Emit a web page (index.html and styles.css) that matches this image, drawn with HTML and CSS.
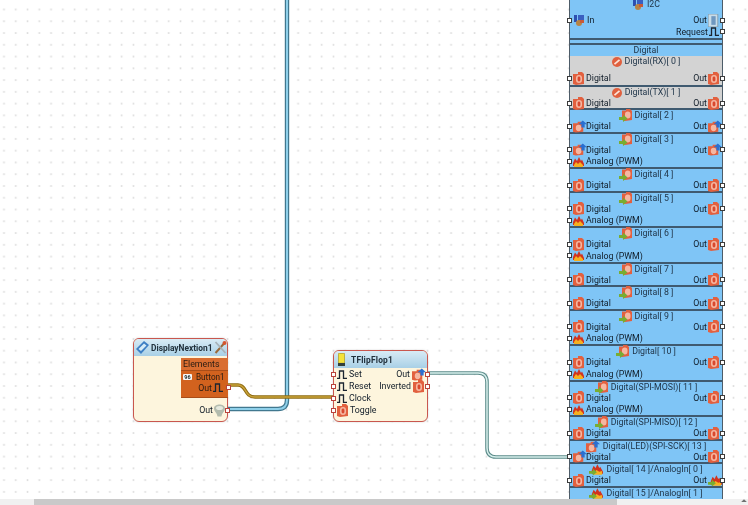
FILE: index.html
```html
<!DOCTYPE html>
<html lang="en">
<head>
<meta charset="utf-8">
<title>Visuino diagram</title>
<link rel="stylesheet" href="styles.css">
</head>
<body>
<svg class="defs" width="0" height="0" aria-hidden="true">
  <symbol id="dig" viewBox="0 0 11 13">
    <path d="M0 2 5 2 5 0 9 0 11 2 11 12 3 13 0 12Z" fill="#e2603f"/>
    <rect x="3" y="3" width="6" height="8" rx="3" fill="#f5b7a2"/>
    <rect x="4.600" y="4.500" width="2.800" height="5" rx="1.400" fill="#d9482e"/>
  </symbol>
  <symbol id="digb" viewBox="0 0 15 13">
    <path d="M0 3 5 3 5 1.500 9 1.500 11 3 11 12 3 13 0 12Z" fill="#e2603f"/>
    <rect x="3" y="4.500" width="6" height="7" rx="3" fill="#f5b7a2"/>
    <path d="M6 4 10.500 0 15 4 12.500 4 12.500 7.500 9 7.500 9 4Z" fill="#2a6fd0"/>
  </symbol>
  <symbol id="digin" viewBox="0 0 13 13">
    <path d="M3 1.500 7 1.500 7 0 11 0 13 2 13 11 6 12 3 11Z" fill="#e2603f"/>
    <rect x="6" y="2.500" width="5.500" height="7" rx="2.700" fill="#f5b7a2"/>
    <path d="M0 8 4 8 4 5.500 8.500 9.500 4 13 4 11 0 11Z" fill="#78ad32"/>
  </symbol>
  <symbol id="pwm" viewBox="0 0 11 11">
    <path d="M0 7 2 2.500 4 5 6 1 8 5 9 3.500 11 8 11 10 0 10Z" fill="#d2331f"/>
    <path d="M1 9 3 6 5 8 7 6 10 9 10 11 1 11Z" fill="#f6b020"/>
  </symbol>
  <symbol id="pwmin" viewBox="0 0 15 13">
    <path d="M3 7 5 2.500 7 5 9 1 11 5 12 3.500 15 9 15 11 3 11Z" fill="#d2331f"/>
    <path d="M5 10 8 7 11 9 14 8 14 12 5 12Z" fill="#f6b020"/>
    <path d="M0 8 4 8 4 5.500 8.500 9.500 4 13 4 11 0 11Z" fill="#78ad32"/>
  </symbol>
  <symbol id="pulse" viewBox="0 0 10 9">
    <path d="M0 8.500H2.500V1H6.500V8.500H10" fill="none" stroke="#1b2530" stroke-width="1.300"/>
  </symbol>
  <symbol id="forbid" viewBox="0 0 10 10">
    <circle cx="5" cy="5" r="5" fill="#e0603f"/>
    <path d="M2.500 7.200 7.500 2.800" stroke="#fde4d8" stroke-width="1.700"/>
  </symbol>
  <symbol id="i2c" viewBox="0 0 12 12">
    <rect x="1" y="1" width="3" height="7" fill="#2d4fb0"/>
    <rect x="5" y="1" width="6" height="7" fill="#3a5fc0"/>
    <circle cx="6" cy="9" r="3" fill="#b78445"/>
    <rect x="7" y="6" width="4" height="3" fill="#c85a38"/>
  </symbol>
  <symbol id="stream" viewBox="0 0 10 12">
    <rect width="9" height="12" fill="#c8dce8" stroke="#7e98a8" stroke-width=".8"/>
    <rect x="3" y="2" width="4" height="8" fill="#6f98c0"/>
  </symbol>
  <symbol id="display" viewBox="0 0 13 13">
    <path d="M0 8 8 0 13 4 5 13Z" fill="#3d7fc4"/>
    <path d="M2.500 8 8 2.500 10.500 4.500 5 10Z" fill="#d6ecf8"/>
  </symbol>
  <symbol id="tools" viewBox="0 0 12 13">
    <path d="M1 12 10 2" stroke="#9a6a3a" stroke-width="2"/>
    <path d="M1 1 11 12" stroke="#a8b2b8" stroke-width="1.800"/>
    <circle cx="10" cy="2" r="2" fill="#d5552f"/>
  </symbol>
  <symbol id="flop" viewBox="0 0 7 13" preserveAspectRatio="none">
    <rect x="0.300" y="0.300" width="6.400" height="10" rx="1" fill="#f4e23a" stroke="#9a8a20" stroke-width=".7"/>
    <rect x="0" y="10" width="7" height="3" fill="#33403a"/>
  </symbol>
  <symbol id="bulb" viewBox="0 0 11 12">
    <path d="M0 4C0 1 3 0 5.500 0S11 1 11 4 8 8 7.500 12H3.500C3 8 0 7 0 4Z" fill="#b4bcae"/>
    <ellipse cx="5.500" cy="3.500" rx="3.500" ry="2" fill="#e6eadf"/>
  </symbol>
</svg>

<main class="canvas">
  <svg class="wires" width="748" height="505" aria-hidden="true">
    <path class="w-blue-o" d="M228 409H278Q287 409 287 400V-2"/>
    <path class="w-blue-i" d="M228 409H278Q287 409 287 400V-2"/>
    <path class="w-teal-o" d="M428 373H478Q487 373 487 382V448Q487 457 496 457H569"/>
    <path class="w-teal-i" d="M428 373H478Q487 373 487 382V448Q487 457 496 457H569"/>
    <path class="w-gold-o" d="M228 385H238C247 385 244 397 255 397H333"/>
    <path class="w-gold-i" d="M228 385H238C247 385 244 397 255 397H333"/>
  </svg>

  <section class="node node-display">
    <header class="node-head">
      <svg class="ic ic13"><use href="#display"/></svg>
      <span class="node-title">DisplayNextion1</span>
      <svg class="ic ic13"><use href="#tools"/></svg>
    </header>
    <div class="elements">
      <div class="el-head">Elements</div>
      <div class="el-row"><span class="el-tag">96</span><span>Button1</span></div>
      <div class="el-out">Out<svg class="ic ic-pulse"><use href="#pulse"/></svg><i class="pin pin-right red"></i></div>
      <div class="el-foot"></div>
    </div>
    <div class="node-out">Out<svg class="ic ic11"><use href="#bulb"/></svg><i class="pin pin-right red"></i></div>
  </section>

  <section class="node node-flop">
    <header class="node-head flop-head">
      <svg class="ic ic-flop"><use href="#flop"/></svg>
      <span class="node-title">TFlipFlop1</span>
    </header>
    <div class="flop-body">
      <div class="flop-row"><i class="pin pin-left red"></i><span class="cell"><svg class="ic ic-pulse"><use href="#pulse"/></svg>Set</span><span class="cell">Out<svg class="ic ic14"><use href="#digb"/></svg><i class="pin pin-right red"></i></span></div>
      <div class="flop-row"><i class="pin pin-left red"></i><span class="cell"><svg class="ic ic-pulse"><use href="#pulse"/></svg>Reset</span><span class="cell">Inverted<svg class="ic ic11"><use href="#dig"/></svg><i class="pin pin-right red"></i></span></div>
      <div class="flop-row"><i class="pin pin-left red"></i><span class="cell"><svg class="ic ic-pulse"><use href="#pulse"/></svg>Clock</span></div>
      <div class="flop-row"><i class="pin pin-left red"></i><span class="cell"><svg class="ic ic11"><use href="#dig"/></svg>Toggle</span></div>
    </div>
  </section>

  <section class="board">
    <div class="sec sec-i2c">
      <div class="sec-title"><svg class="ic ic12"><use href="#i2c"/></svg>I2C</div>
      <div class="row row-first"><i class="pin pin-left"></i><span class="cell"><svg class="ic ic12"><use href="#i2c"/></svg>In</span><span class="cell">Out<svg class="ic ic11"><use href="#stream"/></svg><i class="pin pin-right"></i></span></div>
      <div class="row"><span class="cell"></span><span class="cell">Request<svg class="ic ic-pulse"><use href="#pulse"/></svg><i class="pin pin-right"></i></span></div>
    </div>
    <div class="sec-gap"></div>
    <div class="sec-head">Digital</div>

    <div class="sec sec-rx gray">
      <div class="sec-title"><svg class="ic ic10"><use href="#forbid"/></svg>Digital(RX)[ 0 ]</div>
      <div class="row"><i class="pin pin-left"></i><span class="cell"><svg class="ic ic11"><use href="#dig"/></svg>Digital</span><span class="cell">Out<svg class="ic ic11"><use href="#dig"/></svg><i class="pin pin-right"></i></span></div>
    </div>
    <div class="sec sec-tx gray">
      <div class="sec-title"><svg class="ic ic10"><use href="#forbid"/></svg>Digital(TX)[ 1 ]</div>
      <div class="row"><i class="pin pin-left"></i><span class="cell"><svg class="ic ic11"><use href="#dig"/></svg>Digital</span><span class="cell">Out<svg class="ic ic11"><use href="#dig"/></svg><i class="pin pin-right"></i></span></div>
    </div>

    <div class="sec sec-2">
      <div class="sec-title"><svg class="ic ic13"><use href="#digin"/></svg>Digital[ 2 ]</div>
      <div class="row"><i class="pin pin-left"></i><span class="cell"><svg class="ic ic14"><use href="#digb"/></svg>Digital</span><span class="cell">Out<svg class="ic ic14"><use href="#digb"/></svg><i class="pin pin-right"></i></span></div>
    </div>
    <div class="sec sec-3">
      <div class="sec-title"><svg class="ic ic13"><use href="#digin"/></svg>Digital[ 3 ]</div>
      <div class="row"><i class="pin pin-left"></i><span class="cell"><svg class="ic ic14"><use href="#digb"/></svg>Digital</span><span class="cell">Out<svg class="ic ic14"><use href="#digb"/></svg><i class="pin pin-right"></i></span></div>
      <div class="row"><i class="pin pin-left"></i><span class="cell"><svg class="ic ic11"><use href="#pwm"/></svg>Analog (PWM)</span></div>
    </div>
    <div class="sec sec-2">
      <div class="sec-title"><svg class="ic ic13"><use href="#digin"/></svg>Digital[ 4 ]</div>
      <div class="row"><i class="pin pin-left"></i><span class="cell"><svg class="ic ic11"><use href="#dig"/></svg>Digital</span><span class="cell">Out<svg class="ic ic11"><use href="#dig"/></svg><i class="pin pin-right"></i></span></div>
    </div>
    <div class="sec sec-3">
      <div class="sec-title"><svg class="ic ic13"><use href="#digin"/></svg>Digital[ 5 ]</div>
      <div class="row"><i class="pin pin-left"></i><span class="cell"><svg class="ic ic11"><use href="#dig"/></svg>Digital</span><span class="cell">Out<svg class="ic ic11"><use href="#dig"/></svg><i class="pin pin-right"></i></span></div>
      <div class="row"><i class="pin pin-left"></i><span class="cell"><svg class="ic ic11"><use href="#pwm"/></svg>Analog (PWM)</span></div>
    </div>
    <div class="sec sec-3">
      <div class="sec-title"><svg class="ic ic13"><use href="#digin"/></svg>Digital[ 6 ]</div>
      <div class="row"><i class="pin pin-left"></i><span class="cell"><svg class="ic ic11"><use href="#dig"/></svg>Digital</span><span class="cell">Out<svg class="ic ic11"><use href="#dig"/></svg><i class="pin pin-right"></i></span></div>
      <div class="row"><i class="pin pin-left"></i><span class="cell"><svg class="ic ic11"><use href="#pwm"/></svg>Analog (PWM)</span></div>
    </div>
    <div class="sec sec-2">
      <div class="sec-title"><svg class="ic ic13"><use href="#digin"/></svg>Digital[ 7 ]</div>
      <div class="row"><i class="pin pin-left"></i><span class="cell"><svg class="ic ic11"><use href="#dig"/></svg>Digital</span><span class="cell">Out<svg class="ic ic11"><use href="#dig"/></svg><i class="pin pin-right"></i></span></div>
    </div>
    <div class="sec sec-2">
      <div class="sec-title"><svg class="ic ic13"><use href="#digin"/></svg>Digital[ 8 ]</div>
      <div class="row"><i class="pin pin-left"></i><span class="cell"><svg class="ic ic11"><use href="#dig"/></svg>Digital</span><span class="cell">Out<svg class="ic ic11"><use href="#dig"/></svg><i class="pin pin-right"></i></span></div>
    </div>
    <div class="sec sec-3">
      <div class="sec-title"><svg class="ic ic13"><use href="#digin"/></svg>Digital[ 9 ]</div>
      <div class="row"><i class="pin pin-left"></i><span class="cell"><svg class="ic ic11"><use href="#dig"/></svg>Digital</span><span class="cell">Out<svg class="ic ic11"><use href="#dig"/></svg><i class="pin pin-right"></i></span></div>
      <div class="row"><i class="pin pin-left"></i><span class="cell"><svg class="ic ic11"><use href="#pwm"/></svg>Analog (PWM)</span></div>
    </div>
    <div class="sec sec-3">
      <div class="sec-title"><svg class="ic ic13"><use href="#digin"/></svg>Digital[ 10 ]</div>
      <div class="row"><i class="pin pin-left"></i><span class="cell"><svg class="ic ic11"><use href="#dig"/></svg>Digital</span><span class="cell">Out<svg class="ic ic11"><use href="#dig"/></svg><i class="pin pin-right"></i></span></div>
      <div class="row"><i class="pin pin-left"></i><span class="cell"><svg class="ic ic11"><use href="#pwm"/></svg>Analog (PWM)</span></div>
    </div>
    <div class="sec sec-3">
      <div class="sec-title"><svg class="ic ic13"><use href="#digin"/></svg>Digital(SPI-MOSI)[ 11 ]</div>
      <div class="row"><i class="pin pin-left"></i><span class="cell"><svg class="ic ic11"><use href="#dig"/></svg>Digital</span><span class="cell">Out<svg class="ic ic11"><use href="#dig"/></svg><i class="pin pin-right"></i></span></div>
      <div class="row"><i class="pin pin-left"></i><span class="cell"><svg class="ic ic11"><use href="#pwm"/></svg>Analog (PWM)</span></div>
    </div>
    <div class="sec sec-2">
      <div class="sec-title"><svg class="ic ic13"><use href="#digin"/></svg>Digital(SPI-MISO)[ 12 ]</div>
      <div class="row"><i class="pin pin-left"></i><span class="cell"><svg class="ic ic11"><use href="#dig"/></svg>Digital</span><span class="cell">Out<svg class="ic ic11"><use href="#dig"/></svg><i class="pin pin-right"></i></span></div>
    </div>
    <div class="sec sec-2">
      <div class="sec-title"><svg class="ic ic14"><use href="#digb"/></svg>Digital(LED)(SPI-SCK)[ 13 ]</div>
      <div class="row"><i class="pin pin-left"></i><span class="cell"><svg class="ic ic14"><use href="#digb"/></svg>Digital</span><span class="cell">Out<svg class="ic ic11"><use href="#dig"/></svg><i class="pin pin-right"></i></span></div>
    </div>
    <div class="sec sec-2">
      <div class="sec-title"><svg class="ic ic14"><use href="#pwmin"/></svg>Digital[ 14 ]/AnalogIn[ 0 ]</div>
      <div class="row"><i class="pin pin-left"></i><span class="cell"><svg class="ic ic11"><use href="#dig"/></svg>Digital</span><span class="cell">Out<svg class="ic ic14"><use href="#pwmin"/></svg><i class="pin pin-right"></i></span></div>
    </div>
    <div class="sec sec-2">
      <div class="sec-title"><svg class="ic ic14"><use href="#pwmin"/></svg>Digital[ 15 ]/AnalogIn[ 1 ]</div>
    </div>
  </section>
</main>

<footer class="scrollbar">
  <div class="scroll-start"></div>
  <div class="scroll-thumb"></div>
  <div class="scroll-end"><span class="scroll-corner"></span></div>
</footer>
</body>
</html>
```
FILE: styles.css
```css
* { box-sizing: border-box; }
html, body { margin: 0; height: 100%; overflow: hidden; }
body {
  display: flex;
  flex-direction: column;
  width: 748px;
  height: 505px;
  background: #fff;
  font-family: Roboto, "Liberation Sans", Arial, sans-serif;
  font-size: 8.8px;
  color: #101c28;
}
.defs { position: absolute; }

.canvas {
  position: relative;
  flex: 1;
  overflow: hidden;
  background-image: radial-gradient(circle at 1.500px 1px, #d8d8d8 0, #e2e2e2 .7px, transparent 1.300px);
  background-size: 11.78px 11.78px;
  background-position: 2.500px 8.500px;
  filter: blur(.35px);
}
.wires { position: absolute; left: 0; top: 0; z-index: 1; }
.wires path { fill: none; }
.w-blue-o { stroke: #41788f; stroke-width: 4.400; }
.w-blue-i { stroke: #8fd0ea; stroke-width: 2; }
.w-teal-o { stroke: #5c8c8a; stroke-width: 3.600; }
.w-teal-i { stroke: #d8efed; stroke-width: 1.500; }
.w-gold-o { stroke: #8f6c12; stroke-width: 3.400; }
.w-gold-i { stroke: #c9a23a; stroke-width: 1.400; }

.ic { display: block; flex: none; }
.ic10 { width: 10px; height: 10px; }
.ic11 { width: 11px; height: 13px; }
.ic12 { width: 12px; height: 12px; }
.ic13 { width: 13px; height: 13px; }
.ic14 { width: 14px; height: 13px; }
.ic-pulse { width: 10px; height: 9px; }
.ic-flop { width: 7px; height: 13px; }

.pin {
  position: absolute;
  top: 50%;
  width: 5px;
  height: 5px;
  margin-top: -2.500px;
  background: #fff;
  border: 1px solid #3c3c3c;
  z-index: 3;
}
.pin.red { border-color: #b8433b; }
.pin-left { left: -3px; }
.pin-right { right: -3px; }

/* Small nodes */
.node {
  position: absolute;
  z-index: 2;
  width: 95px;
  background: #fdf5dd;
  border: 1px solid #c9574e;
  border-radius: 6px;
  box-shadow: 0 0 2px rgba(120, 120, 120, .35);
}
.node-display { left: 133px; top: 338px; height: 84px; }
.node-flop { left: 333px; top: 350px; height: 72px; }
.node-head {
  display: flex;
  align-items: center;
  gap: 2px;
  height: 17px;
  padding-left: 2px;
  border-radius: 5px 5px 0 0;
  background: linear-gradient(#d8ebf5, #a9d0e6);
}
.flop-head { padding-left: 4px; gap: 6px; }
.node-title {
  font-weight: 700;
  font-size: 8.400px;
  color: #22313c;
}
.node-display .node-title { margin-right: -1px; }
.flop-head .node-title { letter-spacing: .2px; }

.elements {
  margin: 2px -1px 0 47px;
  height: 40px;
  background: #d2621e;
  color: #2a1c12;
}
.el-head {
  height: 13px;
  padding: 1px 0 0 2px;
  line-height: 10px;
  background: #d96d30;
  border-bottom: 1px solid #a94d18;
}
.el-row {
  display: flex;
  align-items: center;
  gap: 4px;
  height: 11px;
  padding: 1px 0 0 2px;
  font-size: 8.200px;
}
.el-tag {
  width: 9px;
  height: 6px;
  border-radius: 1px;
  background: #f6f6f6;
  color: #233;
  font-size: 5.500px;
  font-weight: 700;
  line-height: 6px;
  text-align: center;
}
.el-out {
  position: relative;
  display: flex;
  align-items: center;
  justify-content: flex-end;
  gap: 1px;
  height: 11px;
  padding-right: 5px;
}
.el-foot { height: 5px; border-bottom: 1px solid #a94d18; }

.node-out {
  position: relative;
  display: flex;
  align-items: center;
  justify-content: flex-end;
  gap: 1px;
  height: 12px;
  margin: 6px 0 0;
  padding-right: 2px;
}

.flop-row {
  position: relative;
  display: flex;
  justify-content: space-between;
  align-items: center;
  height: 12px;
  padding: 0 3px;
}
.cell { display: flex; align-items: center; gap: 1px; }
.flop-body .cell { gap: 2px; }
.flop-body .ic14 { margin-right: -2px; }

/* Board */
.board {
  position: absolute;
  z-index: 2;
  left: 569px;
  top: -3px;
  width: 154px;
  background: #7fc5f6;
  border-left: 1px solid #4d5c68;
  border-right: 1px solid #4d5c68;
}
.sec { border-bottom: 2px solid #3f5a70; }
.sec-title {
  display: flex;
  align-items: center;
  justify-content: center;
  gap: 3px;
  height: 11px;
  line-height: 11px;
  white-space: nowrap;
  color: #21364a;
}
.row {
  position: relative;
  display: flex;
  justify-content: space-between;
  align-items: center;
  height: 12px;
  padding: 0 3px;
  white-space: nowrap;
}
.sec-title + .row { margin-top: -1px; }
.row + .row { margin-top: -.5px; }
.row .cell { gap: 1px; }
.row .cell:first-of-type { gap: 2px; }
.row .ic14 { margin-right: -3px; }
.row .pin-left { left: -3.500px; }
.sec-i2c { height: 43px; padding-top: 3px; }
.sec-i2c .sec-title { height: 8px; line-height: 8px; }
.sec-i2c .row-first { margin-top: 6px; }
.sec-gap { height: 5px; border-bottom: 2px solid #3f5a70; }
.sec-head { height: 11px; line-height: 11px; text-align: center; color: #21364a; }
.gray { background: #d3d3d3; }
.sec-rx { height: 31px; }
.sec-rx .row { margin-top: 5px; }
.sec-tx { height: 23px; }
.sec-2 { height: 23.500px; }
.sec-3 { height: 35.500px; }

/* Scrollbar */
.scrollbar { display: flex; height: 6px; flex: none; background: #f0f0f0; }
.scroll-start { width: 34px; }
.scroll-thumb { width: 583px; background: #c9c9c9; }
.scroll-end { flex: 1; display: flex; justify-content: flex-end; padding: 1px 2px 0 0; }
.scroll-corner {
  width: 0;
  height: 0;
  border-left: 4px solid transparent;
  border-top: 4px solid #707070;
  transform: rotate(-45deg);
}
```
